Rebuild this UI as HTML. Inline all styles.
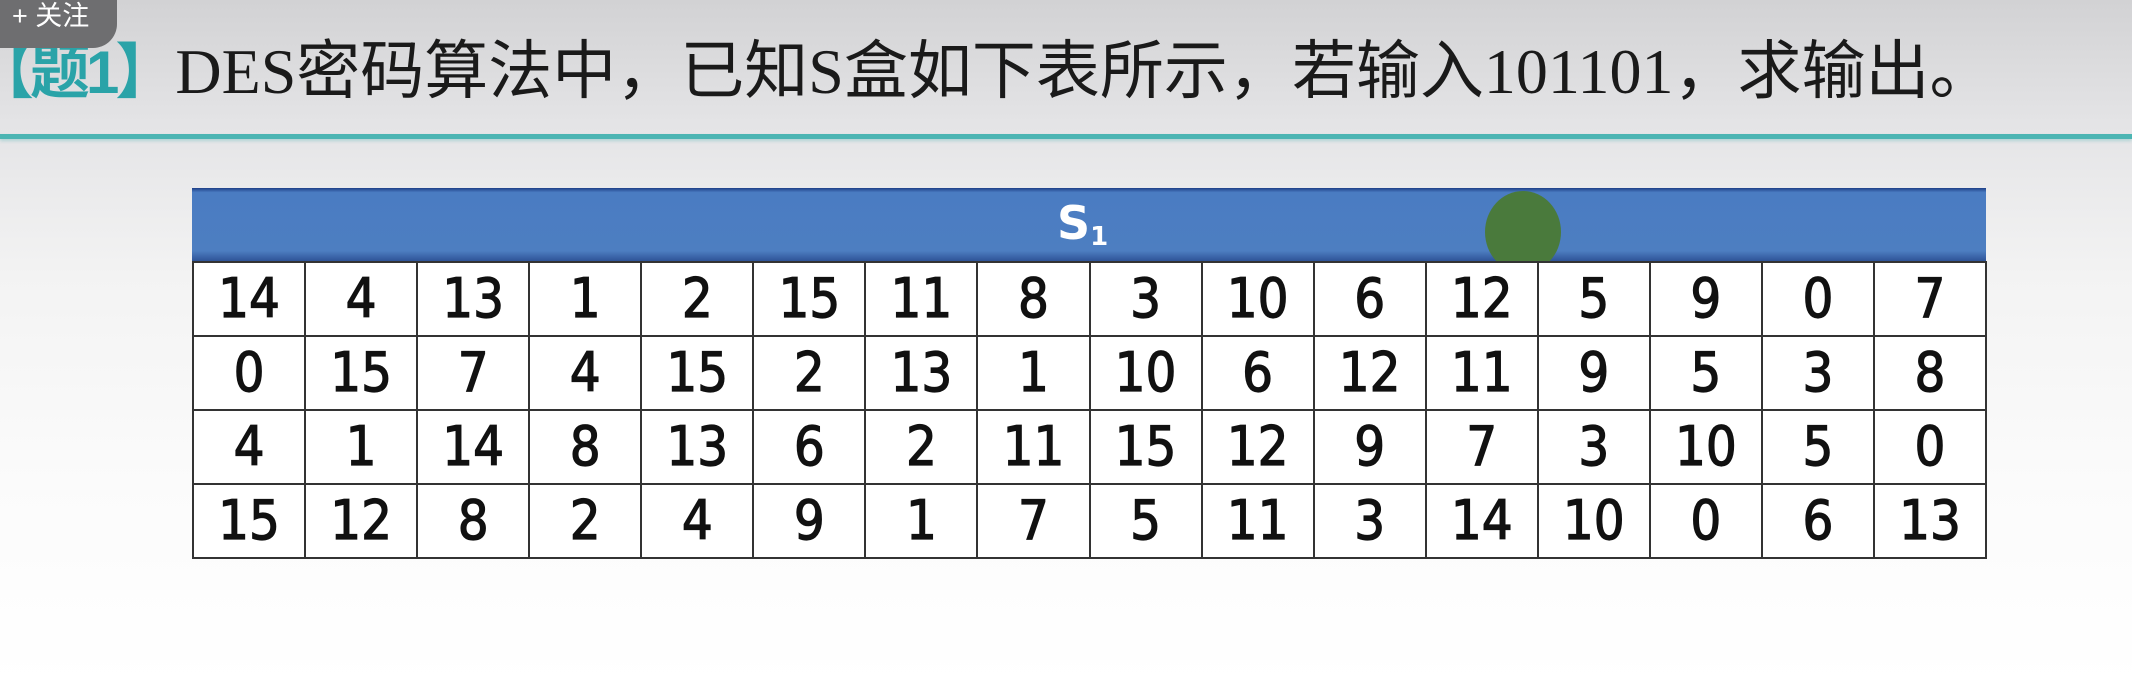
<!DOCTYPE html>
<html><head><meta charset="utf-8"><style>
html,body{margin:0;padding:0}
body{width:2132px;height:687px;overflow:hidden;position:relative;background:linear-gradient(180deg,#d2d2d4 0%,#e4e4e6 18%,#f3f3f3 40%,#fbfbfb 70%,#fff 100%);font-family:"Liberation Serif","Noto Serif CJK SC",serif}
.title{position:absolute;left:-26px;top:20px;font-size:64px;color:#1a1a1a;white-space:nowrap}
.title .b{color:#2aa3a8;font-family:"Liberation Sans","Noto Sans CJK SC",sans-serif;font-weight:bold;font-size:60px;letter-spacing:-4px;margin-right:4px}
.title .c{font-family:"Liberation Serif","Noto Sans CJK SC",serif}
.line{position:absolute;left:0;top:134px;width:2132px;height:5px;background:#4cb5b3;box-shadow:0 2px 3px rgba(80,180,180,.35)}
.badge{position:absolute;left:-10px;top:-20px;width:127px;height:68px;background:#6e6e70;border-radius:0 0 24px 0;color:#fff;font-family:"Liberation Sans","Noto Sans CJK SC",sans-serif;font-size:27px;padding:14px 0 0 22px;box-sizing:border-box}
.hdr{position:absolute;left:192px;top:188px;width:1794px;height:74px;background:linear-gradient(180deg,#1e3f87 0,#4a7cc2 6%,#4d7ec1 85%,#2b4f93 100%)}
.hdr span{position:absolute;left:865px;top:8px;color:#fff;font:bold 46px "DejaVu Sans",sans-serif}
.hdr sub{font-size:26px;vertical-align:-6px}
table{position:absolute;left:192px;top:261px;width:1795px;table-layout:fixed;border-collapse:collapse;font-family:"DejaVu Sans Condensed","DejaVu Sans",sans-serif;font-size:54px;color:#111;-webkit-text-stroke:1.2px #111}
td{border:2.5px solid #333;height:72px;text-align:center;padding:0;line-height:1;background:#fff}
.dot{position:absolute;left:1485px;top:191px;width:76px;height:82px;border-radius:50%;background:#4a7a3c}
</style></head><body>
<div class="title"><span class="b">【题1】</span><span class="c">DES密码算法中，已知S盒如下表所示，若输入101101，求输出。</span></div>
<div class="badge">+ 关注</div>
<div class="line"></div>
<div class="hdr"><span>S<sub>1</sub></span></div>
<div class="dot"></div>
<table>
<tr><td>14</td><td>4</td><td>13</td><td>1</td><td>2</td><td>15</td><td>11</td><td>8</td><td>3</td><td>10</td><td>6</td><td>12</td><td>5</td><td>9</td><td>0</td><td>7</td></tr>
<tr><td>0</td><td>15</td><td>7</td><td>4</td><td>15</td><td>2</td><td>13</td><td>1</td><td>10</td><td>6</td><td>12</td><td>11</td><td>9</td><td>5</td><td>3</td><td>8</td></tr>
<tr><td>4</td><td>1</td><td>14</td><td>8</td><td>13</td><td>6</td><td>2</td><td>11</td><td>15</td><td>12</td><td>9</td><td>7</td><td>3</td><td>10</td><td>5</td><td>0</td></tr>
<tr><td>15</td><td>12</td><td>8</td><td>2</td><td>4</td><td>9</td><td>1</td><td>7</td><td>5</td><td>11</td><td>3</td><td>14</td><td>10</td><td>0</td><td>6</td><td>13</td></tr>
</table>
</body></html>
